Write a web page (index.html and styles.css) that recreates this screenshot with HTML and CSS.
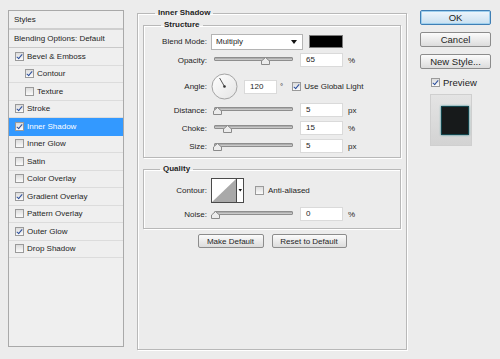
FILE: index.html
```html
<!DOCTYPE html>
<html lang="en">
  <head>
    <title>Layer Style</title>
    <meta charset="utf-8">
    <link rel="stylesheet" href="styles.css">
  </head>
  <body>
    <div class="dialog">

      <ul class="styles">
        <li class="styles__head">Styles</li>
        <li class="styles__item styles__item--blend">Blending Options: Default</li>
        <li class="styles__item"><span class="check check--on"></span>Bevel &amp; Emboss</li>
        <li class="styles__item styles__item--sub"><span class="check check--on"></span>Contour</li>
        <li class="styles__item styles__item--sub"><span class="check"></span>Texture</li>
        <li class="styles__item"><span class="check check--on"></span>Stroke</li>
        <li class="styles__item styles__item--active"><span class="check check--on"></span>Inner Shadow</li>
        <li class="styles__item"><span class="check"></span>Inner Glow</li>
        <li class="styles__item"><span class="check"></span>Satin</li>
        <li class="styles__item"><span class="check"></span>Color Overlay</li>
        <li class="styles__item"><span class="check check--on"></span>Gradient Overlay</li>
        <li class="styles__item"><span class="check"></span>Pattern Overlay</li>
        <li class="styles__item"><span class="check check--on"></span>Outer Glow</li>
        <li class="styles__item"><span class="check"></span>Drop Shadow</li>
      </ul>

      <fieldset class="group group--main">
        <legend>Inner Shadow</legend>

        <fieldset class="group group--structure">
          <legend>Structure</legend>

          <div class="row row--blend">
            <span class="row__label">Blend Mode:</span>
            <div class="select">
              <span>Multiply</span>
              <span class="select__arrow"></span>
            </div>
            <span class="swatch"></span>
          </div>

          <div class="row row--opacity">
            <span class="row__label">Opacity:</span>
            <div class="slider">
              <div class="slider__track">
                <svg class="slider__thumb" style="left: 65%" width="9" height="8" viewBox="0 0 9 8"><polygon points="4.5,0.5 8.5,4 8.5,7.5 0.5,7.5 0.5,4" fill="#ececec" stroke="#8a8a8a"/></svg>
              </div>
            </div>
            <span class="field">65</span>
            <span class="row__unit">%</span>
          </div>

          <div class="row row--angle">
            <span class="row__label">Angle:</span>
            <svg class="dial" width="27" height="27" viewBox="0 0 27 27">
              <defs>
                <linearGradient id="dialFill" x1="0" y1="0" x2="1" y2="1">
                  <stop offset="0" stop-color="#ffffff"/>
                  <stop offset="1" stop-color="#e4e4e4"/>
                </linearGradient>
              </defs>
              <circle cx="13.5" cy="13.5" r="12.5" fill="url(#dialFill)" stroke="#a4a4a4"/>
              <line x1="13.5" y1="13.5" x2="8.6" y2="5" stroke="#555" stroke-width="1"/>
              <circle cx="13.5" cy="13.5" r="1.3" fill="#333"/>
            </svg>
            <span class="field field--short">120</span>
            <span class="row__degree">°</span>
            <span class="check check--on check--wide"></span>
            <span>Use Global Light</span>
          </div>

          <div class="row row--distance">
            <span class="row__label">Distance:</span>
            <div class="slider">
              <div class="slider__track">
                <svg class="slider__thumb" style="left: 2%" width="9" height="8" viewBox="0 0 9 8"><polygon points="4.5,0.5 8.5,4 8.5,7.5 0.5,7.5 0.5,4" fill="#ececec" stroke="#8a8a8a"/></svg>
              </div>
            </div>
            <span class="field">5</span>
            <span class="row__unit">px</span>
          </div>

          <div class="row row--choke">
            <span class="row__label">Choke:</span>
            <div class="slider">
              <div class="slider__track">
                <svg class="slider__thumb" style="left: 15%" width="9" height="8" viewBox="0 0 9 8"><polygon points="4.5,0.5 8.5,4 8.5,7.5 0.5,7.5 0.5,4" fill="#ececec" stroke="#8a8a8a"/></svg>
              </div>
            </div>
            <span class="field">15</span>
            <span class="row__unit">%</span>
          </div>

          <div class="row row--size">
            <span class="row__label">Size:</span>
            <div class="slider">
              <div class="slider__track">
                <svg class="slider__thumb" style="left: 2%" width="9" height="8" viewBox="0 0 9 8"><polygon points="4.5,0.5 8.5,4 8.5,7.5 0.5,7.5 0.5,4" fill="#ececec" stroke="#8a8a8a"/></svg>
              </div>
            </div>
            <span class="field">5</span>
            <span class="row__unit">px</span>
          </div>
        </fieldset>

        <fieldset class="group group--quality">
          <legend>Quality</legend>

          <div class="row row--contour">
            <span class="row__label">Contour:</span>
            <svg class="contour" width="33" height="25" viewBox="0 0 33 25">
              <rect x="0.5" y="0.5" width="32" height="24" fill="#ffffff" stroke="#4a4a4a"/>
              <polygon points="1,24 25,1 25,24" fill="#a9a9a9"/>
              <line x1="25.5" y1="0.5" x2="25.5" y2="24.5" stroke="#4a4a4a"/>
              <polygon points="27.5,11 31,11 29.25,13.5" fill="#111"/>
            </svg>
            <span class="check check--aa"></span>
            <span>Anti-aliased</span>
          </div>

          <div class="row row--noise">
            <span class="row__label">Noise:</span>
            <div class="slider">
              <div class="slider__track">
                <svg class="slider__thumb" style="left: 0%" width="9" height="8" viewBox="0 0 9 8"><polygon points="4.5,0.5 8.5,4 8.5,7.5 0.5,7.5 0.5,4" fill="#ececec" stroke="#8a8a8a"/></svg>
              </div>
            </div>
            <span class="field">0</span>
            <span class="row__unit">%</span>
          </div>
        </fieldset>

        <div class="defaults">
          <button class="button button--make">Make Default</button>
          <button class="button button--reset">Reset to Default</button>
        </div>
      </fieldset>

      <div class="actions">
        <button class="button button--action button--ok">OK</button>
        <button class="button button--action">Cancel</button>
        <button class="button button--action">New Style...</button>
        <div class="preview-toggle">
          <span class="check check--on"></span>
          <span>Preview</span>
        </div>
        <div class="preview">
          <div class="preview__square"></div>
        </div>
      </div>

    </div>
  </body>
</html>
```

FILE: styles.css
```css
html, body {
  margin: 0;
  padding: 0;
}

body {
  width: 500px;
  height: 359px;
  overflow: hidden;
  background-color: #ececec;
  font-family: "Liberation Sans", Arial, sans-serif;
  font-size: 8px;
  color: #1e1e1e;
}

.dialog {
  display: flex;
  align-items: flex-start;
  padding: 10px 0 0 8px;
}

/* left list of effects */

.styles {
  list-style-type: none;
  margin: 0;
  padding: 0;
  width: 116px;
  height: 337px;
  box-sizing: border-box;
  border: 1px solid #a9a9a9;
  background-color: #efefef;
}

.styles__head {
  height: 19px;
  box-sizing: border-box;
  padding-left: 5px;
  line-height: 17px;
  border-bottom: 2px solid #cfcfcf;
}

.styles__item {
  display: flex;
  align-items: center;
  height: 17.5px;
  box-sizing: border-box;
  padding-left: 6px;
  border-bottom: 1px solid #dcdcdc;
}

.styles__item--blend {
  height: 18px;
  padding-left: 5px;
  border-bottom-color: #c9c9c9;
}

.styles__item--sub {
  padding-left: 16px;
}

.styles__item--active {
  background-color: #3399ff;
  color: #ffffff;
  border-bottom-color: #3399ff;
}

/* checkbox */

.check {
  position: relative;
  display: inline-block;
  flex: none;
  width: 9px;
  height: 9px;
  box-sizing: border-box;
  margin-right: 3px;
  border: 1px solid #9a9a9a;
  background: linear-gradient(#dcdcdc, #fbfbfb);
}

.check--on::after {
  content: "";
  position: absolute;
  left: 2px;
  top: 0;
  width: 2px;
  height: 5px;
  border-right: 1.5px solid #2c4f9c;
  border-bottom: 1.5px solid #2c4f9c;
  transform: rotate(40deg);
}

/* fieldsets */

.group {
  margin: 0;
  padding: 0;
  min-width: 0;
  border: 1px solid #b8b8b8;
  box-shadow: inset 1px 1px 0 #ffffff, 1px 1px 0 #ffffff;
}

.group legend {
  margin-left: 13px;
  padding: 0 3px;
  font-weight: bold;
  line-height: 10px;
}

.group--main {
  width: 270px;
  height: 342px;
  box-sizing: border-box;
  margin: -2px 0 0 13px;
  padding: 0 5px;
}

.group--main > legend {
  margin-left: 12px;
}

.group--structure {
  margin-top: 2px;
  padding-bottom: 4px;
}

.group--structure > legend {
  margin-left: 17px;
}

.group--quality {
  margin-top: 6px;
  padding-bottom: 7px;
}

.group--quality > legend {
  margin-left: 16px;
}

/* rows */

.row {
  display: flex;
  align-items: center;
  height: 14px;
  margin-top: 4px;
}

.row__label {
  width: 63px;
  margin-right: 4px;
  text-align: right;
}

.row__unit {
  margin-left: 5px;
}

.row__degree {
  margin-left: 3px;
  margin-right: 9px;
}

.row--blend {
  height: 17px;
  margin-top: 3px;
}

.row--opacity {
  margin-top: 3px;
}

.row--angle {
  height: 27px;
  margin-top: 6px;
}

.row--distance {
  margin-top: 3px;
}

.row--contour {
  height: 25px;
  margin-top: 4px;
}

.check--aa {
  margin-left: 11px;
  margin-right: 4px;
}

.select {
  display: flex;
  align-items: center;
  justify-content: space-between;
  width: 92px;
  height: 16px;
  box-sizing: border-box;
  padding: 0 5px 0 4px;
  border: 1px solid #b4b4b4;
  background-color: #ffffff;
}

.select__arrow {
  width: 0;
  height: 0;
  border-left: 3px solid transparent;
  border-right: 3px solid transparent;
  border-top: 4px solid #111111;
}

.swatch {
  width: 34px;
  height: 13px;
  box-sizing: border-box;
  margin-left: 6px;
  border: 1px solid #7c7c7c;
  background-color: #000000;
}

.slider {
  width: 86px;
  height: 14px;
  margin-right: 3px;
}

.slider__track {
  position: relative;
  height: 4px;
  box-sizing: border-box;
  margin: 4px 4px 0 3px;
  border: 1px solid #8e8e8e;
  border-radius: 1px;
  background: linear-gradient(#a0a0a0, #d6d6d6);
}

.slider__thumb {
  position: absolute;
  top: -1px;
  margin-left: -4px;
}

.field {
  width: 43px;
  height: 14px;
  box-sizing: border-box;
  padding-left: 5px;
  line-height: 12px;
  border: 1px solid #dadada;
  background-color: #ffffff;
}

.field--short {
  width: 33px;
  margin-left: 6px;
}

.contour {
  display: block;
}

/* buttons */

.defaults {
  display: flex;
  justify-content: center;
  gap: 8px;
  margin-top: 5px;
}

.button {
  height: 14px;
  box-sizing: border-box;
  padding: 0;
  border: 1px solid #8c8c8c;
  border-radius: 2px;
  background: linear-gradient(#fbfbfb, #dcdcdc);
  font-family: inherit;
  font-size: 8px;
  color: #1e1e1e;
}

.button--make {
  width: 66px;
}

.button--reset {
  width: 75px;
}

.actions {
  display: flex;
  flex-direction: column;
  width: 71px;
  margin-left: 13px;
  font-size: 9.5px;
}

.button--action {
  width: 71px;
  height: 15px;
  margin-bottom: 7px;
  font-size: 9.5px;
}

.button--ok {
  border-color: #3f7fb5;
  background: linear-gradient(#eef6fc, #c9e0f0);
  box-shadow: inset 0 0 0 1px #9fd0ee;
}

.preview-toggle {
  display: flex;
  align-items: center;
  margin: 1px 0 0 11px;
}

.preview {
  width: 42px;
  height: 52px;
  box-sizing: border-box;
  margin: 6px 0 0 10px;
  padding: 12px 0 0 11px;
  border: 1px solid #cfcfcf;
  background: linear-gradient(#e4e4e4, #d3d3d3);
}

.preview__square {
  width: 26px;
  height: 27px;
  background-color: #171a1b;
  box-shadow: 0 0 0 1px #13444b, 0 0 2px 1px #2c8791;
}
```
